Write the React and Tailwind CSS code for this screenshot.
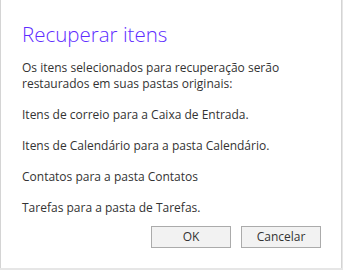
import React from "react";

function App() {
  return (
    <div className="w-[343px] h-[270px] bg-[#e6e6e6] font-['Segoe_UI','Open_Sans',sans-serif]">
      <div className="w-[342px] h-[268px] bg-white border-l border-r border-[#d4d4d4] flex flex-col pl-[21px] pr-[20px]">
        {/* Heading */}
        <h1 className="mt-[21px] text-[20.5px] leading-[26px] font-light text-[#5e2cff]">
          Recuperar itens
        </h1>

        <div className="mt-[13px] text-[12px] leading-[16px] text-[#333333]">
          <p>
            Os itens selecionados para recuperação serão restaurados em suas
            pastas originais:
          </p>
          <p className="mt-[15px]">Itens de correio para a Caixa de Entrada.</p>
          <p className="mt-[15px]">Itens de Calendário para a pasta Calendário.</p>
          <p className="mt-[15px]">Contatos para a pasta Contatos</p>
          <p className="mt-[15px]">Tarefas para a pasta de Tarefas.</p>
        </div>

        {/* Buttons */}
        <div className="mt-[10px] flex justify-end gap-[10px]">
          <button className="w-[80px] h-[22px] bg-[#f2f2f2] border border-[#ababab] text-[12px] text-[#333333]">
            OK
          </button>
          <button className="w-[80px] h-[22px] bg-[#f2f2f2] border border-[#ababab] text-[12px] text-[#333333]">
            Cancelar
          </button>
        </div>
      </div>
    </div>
  );
}

export default App;
